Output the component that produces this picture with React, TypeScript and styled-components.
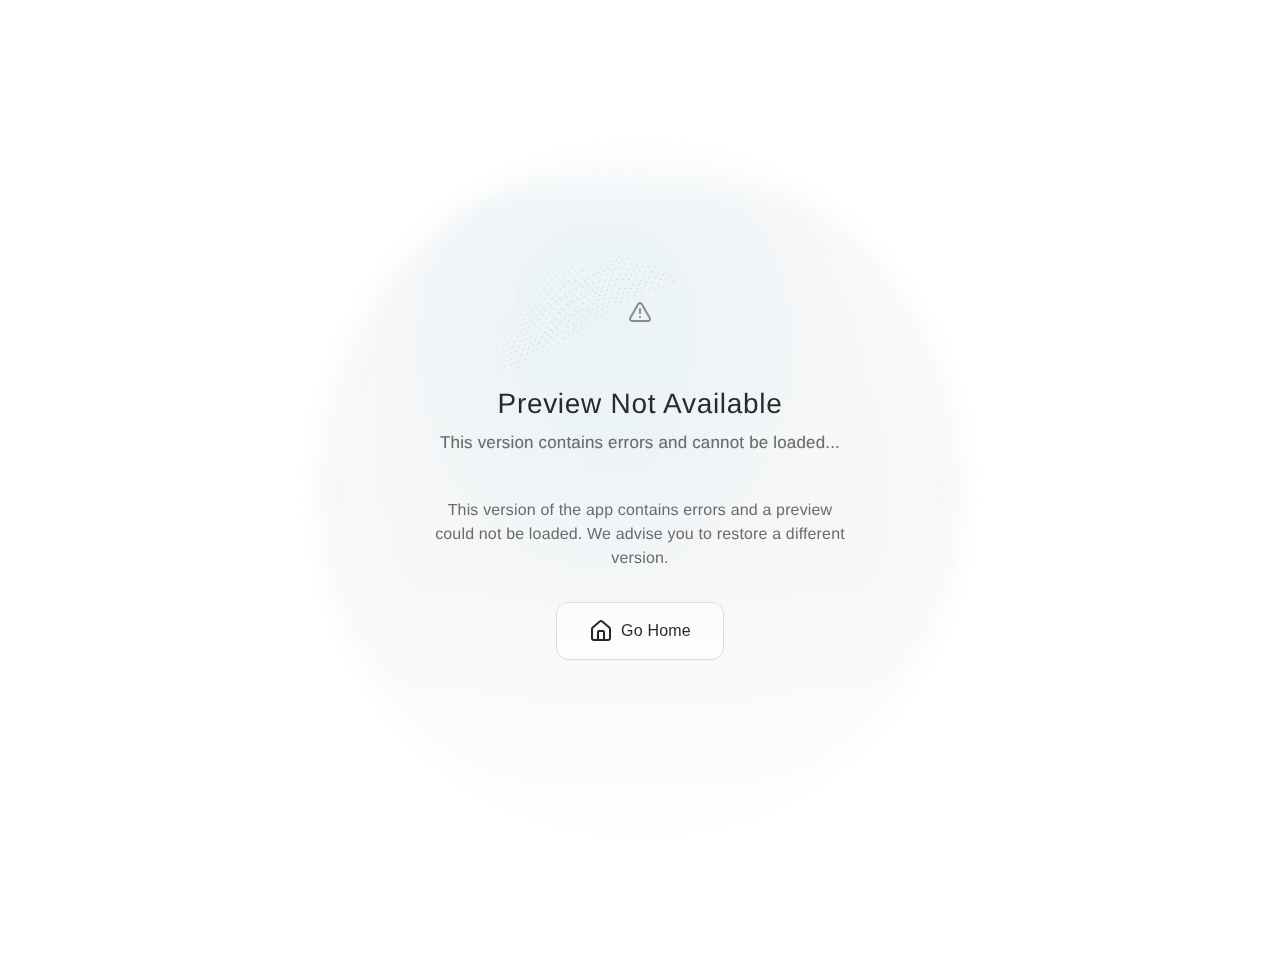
import { useMemo } from "react";
import styled, { createGlobalStyle } from "styled-components";
import { Home, TriangleAlert } from "lucide-react";

const GlobalStyle = createGlobalStyle`
  html, body {
    margin: 0;
    background: #ffffff;
    font-family: "Liberation Sans", Arial, sans-serif;
    text-rendering: geometricPrecision;
  }
`;

const Page = styled.main`
  position: relative;
  height: 960px;
  overflow: hidden;
  display: flex;
  justify-content: center;
  align-items: center;
`;

const Glow = styled.div`
  position: absolute;
  left: 318px;
  top: 152px;
  width: 644px;
  height: 676px;
  border-radius: 50%;
  background:
    linear-gradient(to bottom, rgba(255, 255, 255, 0.8) 0%, rgba(255, 255, 255, 0) 9%, rgba(255, 255, 255, 0) 62%, rgba(255, 255, 255, 0.7) 96%),
    radial-gradient(ellipse 235px 285px at 44% 26%, rgba(233, 243, 246, 0.95) 0%, rgba(236, 243, 246, 0.75) 50%, rgba(240, 244, 246, 0) 100%),
    radial-gradient(circle at 50% 50%, #f5f6f7 0%, #f6f7f8 40%, #f8f8f9 72%, #f9fafa 90%, #fbfbfb 96%, rgba(255, 255, 255, 0) 100%);
  filter: blur(10px);
`;

const Dots = styled.svg`
  position: absolute;
  left: 480px;
  top: 230px;
  width: 220px;
  height: 150px;
`;

const Content = styled.section`
  position: relative;
  width: 420px;
  display: flex;
  flex-direction: column;
  align-items: center;
  text-align: center;
  will-change: transform;
`;

const AlertIcon = styled(TriangleAlert)`
  display: block;
  color: #8c8a8a;
  margin-bottom: 62px;
`;

const Title = styled.h1`
  margin: 0 0 9px;
  font-size: 28px;
  font-weight: 400;
  line-height: 36px;
  letter-spacing: 0.7px;
  color: #2a2a2a;
`;

const Subtitle = styled.p`
  margin: 0 0 44px;
  font-size: 17px;
  line-height: 24px;
  letter-spacing: 0.17px;
  color: #6b6b6b;
  text-shadow: 0 0 1px rgba(102, 102, 102, 0.3);
`;

const Description = styled.p`
  margin: 0 0 31px;
  font-size: 16px;
  line-height: 24px;
  letter-spacing: 0.16px;
  color: #6b6b6b;
`;

const HomeButton = styled.button`
  width: 168px;
  height: 58px;
  display: flex;
  justify-content: center;
  align-items: center;
  gap: 8px;
  padding: 0;
  background: rgba(255, 255, 255, 0.6);
  border: 1px solid #dcdcdc;
  border-radius: 12px;
  font: inherit;
  font-size: 16px;
  letter-spacing: 0.2px;
  color: #2a2a2a;
`;

const lerp = (table: number[][], angle: number) => {
  for (let i = 0; i < table.length - 1; i++) {
    const [a0, r0] = table[i];
    const [a1, r1] = table[i + 1];
    if (angle >= a1 && angle <= a0) return r0 + ((r1 - r0) * (a0 - angle)) / (a0 - a1);
  }
  return 0;
};

const outer = [[178, 128], [172, 131], [134, 136], [104, 134], [89, 132], [67, 117], [60, 112]];
const inner = [[178, 110], [163, 81], [143, 62], [120, 64], [102, 61], [80, 78], [62, 101], [60, 104]];

// dots of the crescent behind the alert icon, in rings round one centre
function useDots() {
  return useMemo(() => {
    const dots: { x: number; y: number; o: number }[] = [];
    let ring = 0;
    for (let r = 60; r <= 137; r += 4.6) {
      ring++;
      const step = (6 / r) * (180 / Math.PI);
      for (let a = 178 - (ring * 1.37) % step; a >= 60; a -= step) {
        const rOut = lerp(outer, a);
        const rIn = lerp(inner, a);
        const rr = r + 1.2 * Math.sin(a * 1.7 + ring * 2.1);
        if (rr > rOut || rr < rIn) continue;
        const t = (rr - rIn) / (rOut - rIn);
        // thin the dots out towards the outer edge of the band
        if (t > 0.8 && Math.sin(a * 13.7 + ring) > 0.35) continue;
        const o = 0.55 + 0.45 * Math.sin(Math.PI * Math.min(1, t + 0.15));
        const rad = (a * Math.PI) / 180;
        dots.push({ x: 145 + rr * Math.cos(rad), y: 145 - rr * Math.sin(rad), o });
      }
    }
    return dots;
  }, []);
}

export default function App() {
  const dots = useDots();
  return (
    <>
      <GlobalStyle />
      <Page>
        <Glow />
        <Dots viewBox="0 0 220 150">
          {dots.map((d, i) => (
            <circle key={i} cx={d.x} cy={d.y} r={0.6} fill="#c6c9cb" opacity={d.o} />
          ))}
        </Dots>
        <Content>
          <AlertIcon size={24} strokeWidth={2} />
          <Title>Preview Not Available</Title>
          <Subtitle>This version contains errors and cannot be loaded...</Subtitle>
          <Description>
            This version of the app contains errors and a preview could not be loaded. We advise you to restore a
            different version.
          </Description>
          <HomeButton>
            <Home size={24} strokeWidth={2} color="#262626" />
            Go Home
          </HomeButton>
        </Content>
      </Page>
    </>
  );
}
